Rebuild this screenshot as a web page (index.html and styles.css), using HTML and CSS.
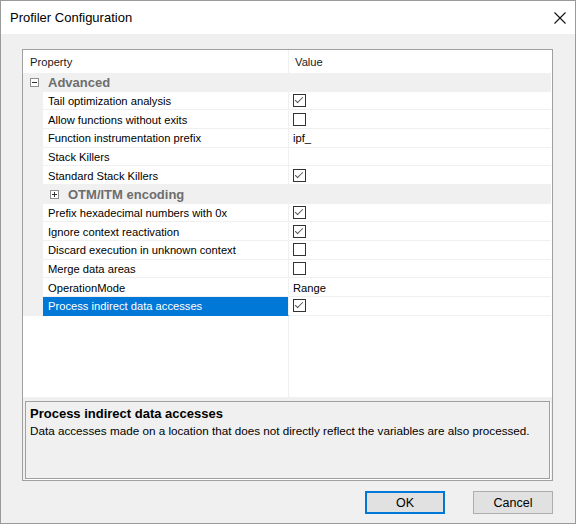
FILE: index.html
```html
<!DOCTYPE html>
<html>
<head>
    <title>Profiler Configuration</title>
    <link rel="stylesheet" href="styles.css">
</head>
<body>
    <div class="window">
        <div class="titlebar">
            <span class="title">Profiler Configuration</span>
            <svg class="close" width="12" height="12" viewBox="0 0 12 12">
                <path d="M0.5 0.5 L11.5 11.5 M11.5 0.5 L0.5 11.5" stroke="#111" stroke-width="1.1" fill="none"/>
            </svg>
        </div>

        <div class="content">
            <div class="propgrid">
                <div class="grid">
                    <div class="row head">
                        <div class="name">Property</div>
                        <div class="value">Value</div>
                    </div>

                    <div class="row cat">
                        <span class="toggle minus"></span>
                        <span class="cat-label">Advanced</span>
                    </div>
                    <div class="row">
                        <div class="margin"></div>
                        <div class="name">Tail optimization analysis</div>
                        <div class="value"><span class="check on"></span></div>
                    </div>
                    <div class="row">
                        <div class="margin"></div>
                        <div class="name">Allow functions without exits</div>
                        <div class="value"><span class="check"></span></div>
                    </div>
                    <div class="row">
                        <div class="margin"></div>
                        <div class="name">Function instrumentation prefix</div>
                        <div class="value">ipf_</div>
                    </div>
                    <div class="row">
                        <div class="margin"></div>
                        <div class="name">Stack Killers</div>
                        <div class="value"></div>
                    </div>
                    <div class="row">
                        <div class="margin"></div>
                        <div class="name">Standard Stack Killers</div>
                        <div class="value"><span class="check on"></span></div>
                    </div>

                    <div class="row cat sub">
                        <span class="toggle plus"></span>
                        <span class="cat-label">OTM/ITM encoding</span>
                    </div>
                    <div class="row">
                        <div class="margin"></div>
                        <div class="name">Prefix hexadecimal numbers with 0x</div>
                        <div class="value"><span class="check on"></span></div>
                    </div>
                    <div class="row">
                        <div class="margin"></div>
                        <div class="name">Ignore context reactivation</div>
                        <div class="value"><span class="check on"></span></div>
                    </div>
                    <div class="row">
                        <div class="margin"></div>
                        <div class="name">Discard execution in unknown context</div>
                        <div class="value"><span class="check"></span></div>
                    </div>
                    <div class="row">
                        <div class="margin"></div>
                        <div class="name">Merge data areas</div>
                        <div class="value"><span class="check"></span></div>
                    </div>
                    <div class="row">
                        <div class="margin"></div>
                        <div class="name">OperationMode</div>
                        <div class="value">Range</div>
                    </div>
                    <div class="row selected">
                        <div class="margin"></div>
                        <div class="name">Process indirect data accesses</div>
                        <div class="value"><span class="check on"></span></div>
                    </div>

                    <div class="filler">
                        <div class="filler-left"></div>
                        <div class="filler-right"></div>
                    </div>
                </div>

                <div class="help">
                    <div class="help-title">Process indirect data accesses</div>
                    <div class="help-text">Data accesses made on a location that does not directly reflect the variables are also processed.</div>
                </div>
            </div>

            <div class="buttons">
                <button class="btn default">OK</button>
                <button class="btn">Cancel</button>
            </div>
        </div>
    </div>
</body>
</html>
```

FILE: styles.css
```css
:root {
    --face: #f0f0f0;
    --line: #f0f0f0;
    --select: #0078d7;
    --border: #a0a0a0;
}
* {
    box-sizing: border-box;
}
body {
    margin: 0;
    font-family: 'Liberation Sans', Arial, sans-serif;
    color: #000;
}
.window {
    width: 576px;
    height: 524px;
    border: 1px solid #9a9a9a;
    background: var(--face);
    display: flex;
    flex-direction: column;
}
.titlebar {
    height: 33px;
    background: #fff;
    display: flex;
    align-items: center;
    justify-content: space-between;
    padding: 0 9px 0 9px;
}
.title {
    font-size: 13px;
    color: #000;
}
.close {
    display: block;
}
.content {
    padding: 15px 22px 0 21px;
}
.propgrid {
    width: 531px;
    height: 432px;
    border: 1px solid var(--border);
    background: var(--face);
    display: flex;
    flex-direction: column;
}
.grid {
    height: 347px;
    background: #fff;
    display: flex;
    flex-direction: column;
    padding-right: 1px;
    font-size: 11.2px;
}
.row {
    display: grid;
    grid-template-columns: 20px 246px 1fr;
    height: 18.67px;
    flex: none;
}
.row .name,
.row .value {
    border-bottom: 1px solid var(--line);
    display: flex;
    align-items: center;
    white-space: nowrap;
    padding-top: 1px;
}
.row .name {
    padding-left: 5px;
    border-right: 1px solid var(--line);
}
.row .value {
    padding-left: 4px;
}
.margin {
    background: var(--face);
}
.row.head {
    height: 23px;
    grid-template-columns: 266px 1fr;
}
.row.head .name,
.row.head .value {
    border-bottom: none;
    color: #1a1a1a;
}
.row.head .name {
    padding-left: 7px;
}
.row.head .value {
    padding-left: 6px;
}
.row.cat {
    display: flex;
    align-items: center;
    background: var(--face);
    padding-left: 7px;
}
.row.cat.sub {
    padding-left: 27px;
}
.cat-label {
    font-size: 13px;
    font-weight: bold;
    color: #6d6d6d;
    margin-left: 9px;
}
.toggle {
    width: 9px;
    height: 9px;
    border: 1px solid #8f8f8f;
    background: #fff;
    position: relative;
    flex: none;
}
.toggle::before {
    content: "";
    position: absolute;
    left: 1px;
    top: 3px;
    width: 5px;
    height: 1px;
    background: #333;
}
.toggle.plus::after {
    content: "";
    position: absolute;
    left: 3px;
    top: 1px;
    width: 1px;
    height: 5px;
    background: #333;
}
.row.selected .name {
    background: var(--select);
    color: #fff;
    border-bottom-color: var(--select);
}
.check {
    width: 13px;
    height: 13px;
    border: 1px solid #333;
    background: #fff;
    position: relative;
    display: block;
    margin-top: -1px;
}
.check.on::after {
    content: "";
    position: absolute;
    left: 3px;
    top: 0px;
    width: 3px;
    height: 7px;
    border-right: 1.3px solid #555;
    border-bottom: 1.3px solid #555;
    transform: rotate(45deg);
}
.filler {
    flex: 1;
    display: grid;
    grid-template-columns: 266px 1fr;
}
.filler-left {
    border-right: 1px solid var(--line);
}
.help {
    margin: 4px 2px 0 2px;
    height: 78px;
    border: 1px solid var(--border);
    box-shadow: 1px 1px 0 #fff;
    padding: 4px 4px;
}
.help-title {
    font-size: 13px;
    font-weight: bold;
    line-height: 16px;
}
.help-text {
    font-size: 11.7px;
    line-height: 17px;
}
.buttons {
    display: flex;
    justify-content: flex-end;
    gap: 28px;
    margin-top: 10px;
}
.btn {
    width: 80px;
    height: 23px;
    background: #e1e1e1;
    border: 1px solid #adadad;
    font-family: 'Liberation Sans', Arial, sans-serif;
    font-size: 12.5px;
    color: #000;
    padding: 0;
}
.btn.default {
    border: 2px solid var(--select);
}
```
